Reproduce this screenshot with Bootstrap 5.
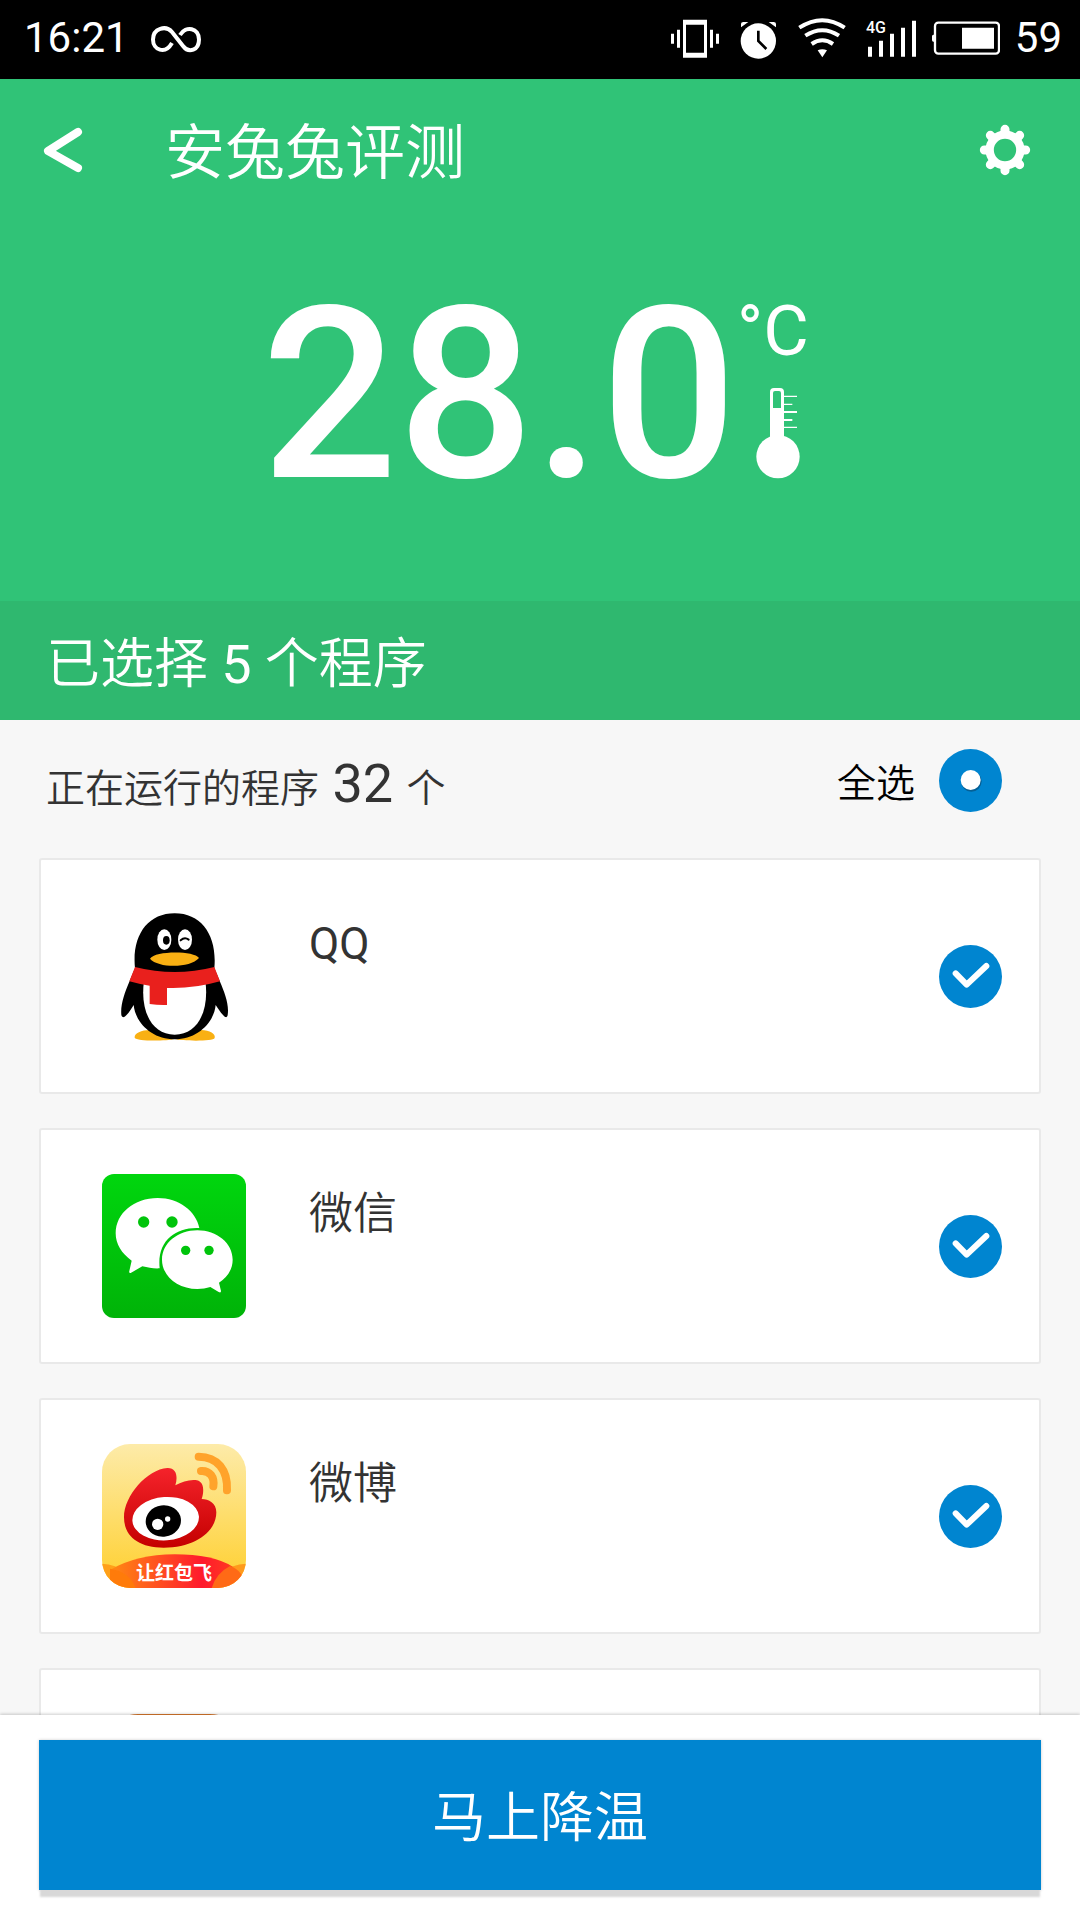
<!DOCTYPE html>
<html lang="zh-CN">
<head>
<meta charset="utf-8">
<meta name="viewport" content="width=device-width, initial-scale=1">
<title>安兔兔评测</title>
<link href="https://cdn.jsdelivr.net/npm/bootstrap@5.3.0/dist/css/bootstrap.min.css" rel="stylesheet">
<style>
:root { --green: #30c377; --green-dark: #2fb86f; --blue: #0085d0; }
body { font-family: Roboto, "Noto Sans CJK SC", sans-serif; font-weight: 350; background: #f7f7f7; color: #333; }
svg { display: block; flex: none; }
.latin { font-weight: 400; }
.status-bar { height: 79px; flex: none; background: #000; font-size: 42px; line-height: 48px; padding: 0 18px 0 24px; }
.status-bar span { padding-bottom: 4px; }
.status-left { gap: 22px; }
.status-icons { gap: 15px; }
.hero { background: var(--green); flex: none; }
.title-bar { height: 142px; padding: 0 46px 0 40px; }
.app-title { font-size: 60px; line-height: 72px; font-weight: 350; margin-left: 77px; padding-top: 8px; }
.reading { padding: 54px 10px 86px 0; }
.degrees { font-size: 240px; line-height: 240px; font-weight: 500; }
.unit-box { padding: 20px 0 0; }
.unit { font-size: 70px; line-height: 72px; }
.thermo { margin: 20px 0 0 18px; }
.selected-bar { background: var(--green-dark); font-size: 54px; line-height: 79px; padding: 24px 46px 16px; }
.list-head { font-size: 39px; line-height: 60px; padding: 22px 78px 39px 46px; }
.running { padding-top: 12px; }
.run-count { font-size: 54px; }
.all-label { color: #000; padding-top: 6px; }
.round-check.form-check-input { width: 63px; height: 63px; margin: 0; border: 0; border-radius: 50%; background-size: 100% 100%; flex: none; }
.round-check:checked { background-color: var(--blue); }
.round-check[type=checkbox]:checked { background-image: url("data:image/svg+xml,%3Csvg xmlns='http://www.w3.org/2000/svg' viewBox='0 0 189 189'%3E%3Cpath d='M50 85L83 119L142 63' fill='none' stroke='%23fff' stroke-width='18' stroke-linecap='round' stroke-linejoin='round'/%3E%3C/svg%3E"); }
.round-check[type=radio]:checked { background-image: url("data:image/svg+xml,%3Csvg xmlns='http://www.w3.org/2000/svg' viewBox='0 0 189 189'%3E%3Ccircle cx='97' cy='97' r='31' fill='%23056096'/%3E%3Ccircle cx='95' cy='93' r='30' fill='%23fff'/%3E%3C/svg%3E"); }
.app-list { padding: 0 39px; gap: 34px; }
.app-card { height: 236px; flex: none; border: 2px solid #e9e9e9; border-radius: 3px; padding: 0 37px 0 61px; background: #fff; }
.app-card svg, .app-card .app-icon { width: 144px; height: 144px; }
.app-name { font-size: 44px; line-height: 60px; margin: 54px 0 0 63px; align-self: flex-start; }
.app-icon { background: linear-gradient(#d9782c 2px, #f0a050); border-radius: 36px; }
.footer-bar { background: #fff; padding: 25px 39px 30px; box-shadow: 0 -1px 3px rgba(0,0,0,.2); z-index: 1; flex: none; }
.cool-btn { height: 150px; background: var(--blue); color: #fff; border: 0; border-radius: 0; font-size: 54px; line-height: 60px; padding-top: 14px; font-weight: 350; box-shadow: 0 8px 2px -1px #d8d8d8, 0 0 3px rgba(0,0,0,.2); }
.cool-btn:hover { background: #0077bb; color: #fff; }
</style>
</head>
<body>
<div class="d-flex flex-column vh-100 overflow-hidden">
  <div class="status-bar latin d-flex align-items-center justify-content-between text-white">
    <div class="status-left d-flex align-items-center">
      <span>16:21</span>
      <svg width="50" height="28" viewBox="0 0 50 28" fill="none" stroke="#fff" stroke-width="4"><path d="M21 17C14 29 2 24 2 13.500C2 2 15 -1 21 6L32 20C38 28 48 24 48 13.500C48 2 35 -1 29 9"/></svg>
    </div>
    <div class="status-icons d-flex align-items-center">
      <svg width="51" height="44" viewBox="93 52 153 132" fill="#fff"><path fill-rule="evenodd" d="M129 57h72v114h-72zM138 72v84h54V72z"/><path d="M93 99h9v30h-9zM111 87h9v54h-9zM210 87h9v54h-9zM228 99h9v30h-9z"/></svg>
      <svg width="42" height="44" viewBox="291 52 126 132"><circle cx="355" cy="121" r="53" fill="#fff"/><path d="M303 80V70Q303 64 310 64H325ZM408 80V70Q408 64 401 64H386Z" fill="#fff"/><path d="M355 90V121L379 145" fill="none" stroke="#000" stroke-width="8"/></svg>
      <svg width="56" height="44" viewBox="462 52 168 132" fill="none" stroke="#fff" stroke-width="12"><path d="M478 81Q547 36 614 81M496 105Q547 72 597 105M515 130Q547 108 579 130"/><path d="M533 149Q547 142 561 149L547 170Z" fill="#fff" stroke="none"/></svg>
      <svg width="52" height="44" viewBox="675 52 156 132" fill="#fff"><text x="678" y="96" font-size="48" font-weight="500">4G</text><path d="M684 138h12v30h-12zM717 120h12v48h-12zM750 99h12v69h-12zM783 81h12v87h-12zM816 60h12v108h-12z"/></svg>
      <svg width="68" height="44" viewBox="876 52 204 132"><rect x="885" y="66" width="192" height="93" rx="10" fill="none" stroke="#fff" stroke-width="7"/><path d="M966 81h96v63h-96zM883 102h-3q-4 0-4 5v11q0 5 4 5h3z" fill="#fff"/></svg>
      <span>59</span>
    </div>
  </div>

  <header class="hero text-white">
    <nav class="title-bar d-flex align-items-center">
      <a href="#" aria-label="返回"><svg width="48" height="54" viewBox="0 0 48 54" fill="none" stroke="#fff" stroke-width="8" stroke-linecap="round" stroke-linejoin="round"><path d="M38 9L8 28L38 45"/></svg></a>
      <h1 class="app-title mb-0">安兔兔评测</h1>
      <button type="button" class="btn p-0 border-0 ms-auto" aria-label="设置"><svg width="58" height="58" viewBox="-87 -87 174 174" stroke="#fff" fill="none"><circle r="46" stroke-width="25"/><path stroke-width="27" stroke-linecap="round" d="M0 -62V-50M0 62V50M-62 0H-50M62 0H50M-44 -44L-36 -36M44 44L36 36M-44 44L-36 36M44 -44L36 -36"/></svg></button>
    </nav>
    <div class="reading d-flex justify-content-center">
      <span class="degrees">28.0</span>
      <div class="unit-box d-flex flex-column align-items-start">
        <span class="unit latin">°C</span>
        <svg class="thermo" width="48" height="92" viewBox="102 291 144 276" fill="#fff"><path fill-rule="evenodd" d="M147 450V306Q147 294 159 294H177Q189 294 189 306V450ZM156 354H180V309Q180 303 174 303H162Q156 303 156 309Z"/><circle cx="171" cy="500" r="65"/><path d="M189 317h39v4h-39zM189 341h25v4h-25zM189 363h39v6h-39zM189 387h25v6h-25zM189 410h39v4h-39z"/></svg>
      </div>
    </div>
    <div class="selected-bar">已选择 <span class="latin">5</span> 个程序</div>
  </header>

  <main class="flex-grow-1 overflow-hidden d-flex flex-column">
    <div class="list-head d-flex align-items-center justify-content-between">
      <div class="running">正在运行的程序<span class="run-count latin"> 32 </span>个</div>
      <div class="d-flex align-items-center gap-4">
        <label class="all-label" for="all">全选</label>
        <input class="form-check-input round-check" type="radio" id="all" checked>
      </div>
    </div>
    <div class="app-list d-flex flex-column">
      <div class="app-card d-flex align-items-center">
        <svg viewBox="36 69 432 432">
          <path fill="#f9b013" d="M134 470C132 455 160 445 185 447H330C358 446 378 458 374 471C370 482 275 480 254 474C230 480 140 482 134 470Z"/>
          <path d="M135 262C125 165 172 97 254 97C336 97 382 165 373 262L390 302C404 335 418 370 413 402C410 415 402 410 377 372C372 425 322 475 254 475C186 475 136 425 131 372C108 410 98 415 94 402C91 370 104 335 118 302Z"/>
          <path fill="#fff" d="M162 300C150 385 182 461 254 461C326 461 358 385 346 300Z"/>
          <path fill="#e9201d" d="M135 258Q254 288 373 258L390 301Q310 324 231 321V372Q205 373 179 369V314Q145 309 118 301Z"/>
          <ellipse cx="223" cy="176" rx="21" ry="31" fill="#fff"/><ellipse cx="285" cy="176" rx="21" ry="31" fill="#fff"/>
          <ellipse cx="229" cy="178" rx="10" ry="13"/><path d="M272 178Q284 167 296 176" fill="none" stroke="#000" stroke-width="6" stroke-linecap="round"/>
          <path fill="#f9b013" d="M180 233C195 209 312 209 327 231C300 262 205 262 180 233Z"/>
        </svg>
        <label class="app-name latin" for="qq">QQ</label>
        <input class="form-check-input round-check ms-auto" type="checkbox" id="qq" checked>
      </div>
      <div class="app-card d-flex align-items-center">
        <svg viewBox="36 42 432 432">
          <defs><linearGradient id="wx" x2="0" y2="1"><stop stop-color="#00d60e"/><stop offset="1" stop-color="#00b308"/></linearGradient></defs>
          <rect x="36" y="42" width="432" height="432" rx="36" fill="url(#wx)"/>
          <path fill="#fff" d="M328 204C260 200 200 240 209 325C190 326 175 323 157 319L122 339Q116 340 118 333L125 302C95 281 77 252 77 220C77 160 132 114 203 114C267 114 318 153 328 204Z"/>
          <path fill="#fff" d="M322 211C381 211 428 250 428 299C428 328 412 352 387 368L393 393Q393 400 386 396L361 381C349 385 336 387 322 387C263 387 216 348 216 299C216 250 263 211 322 211Z"/>
          <g fill="#00c40b"><circle cx="161" cy="186" r="17"/><circle cx="246" cy="186" r="17"/><circle cx="287" cy="271" r="14"/><circle cx="357" cy="271" r="14"/></g>
        </svg>
        <label class="app-name" for="wechat">微信</label>
        <input class="form-check-input round-check ms-auto" type="checkbox" id="wechat" checked>
      </div>
      <div class="app-card d-flex align-items-center">
        <svg viewBox="36 42 432 432">
          <defs>
            <linearGradient id="wb" x2="0" y2="1"><stop stop-color="#fdeba9"/><stop offset="1" stop-color="#ffcf2c"/></linearGradient>
            <linearGradient id="wr" x2="0" y2="1"><stop stop-color="#f5232b"/><stop offset="1" stop-color="#c40000"/></linearGradient>
            <linearGradient id="wo"><stop stop-color="#ff8a12"/><stop offset=".75" stop-color="#ff1a2d"/><stop offset="1" stop-color="#ff3a20"/></linearGradient>
            <clipPath id="wc"><rect x="36" y="42" width="432" height="432" rx="84"/></clipPath>
          </defs>
          <g clip-path="url(#wc)">
            <path fill="url(#wb)" d="M36 42h432v432H36z"/>
            <circle cx="36" cy="502" r="101" fill="#ffa019"/><circle cx="468" cy="502" r="101" fill="#ff9a1c"/>
            <path fill="url(#wo)" d="M60 420Q140 373 254 373Q368 373 428 410L380 474H130Z"/>
            <path fill="#ff7b0a" d="M60 416Q118 425 137 474H60Z"/><path fill="#ff6a16" d="M420 408Q378 430 365 474H468Q460 420 420 408Z"/>
          </g>
          <path fill="url(#wr)" d="M221 353C145 353 102 318 102 262C102 197 172 118 232 114C260 113 264 140 256 166C280 154 312 144 330 155C343 164 341 190 335 207C356 208 379 218 379 247C379 305 315 353 221 353Z"/>
          <ellipse cx="227" cy="266" rx="100" ry="65" transform="rotate(-4 227 266)" fill="#fff"/>
          <ellipse cx="220" cy="273" rx="53" ry="47" transform="rotate(-8 220 273)"/>
          <circle cx="203" cy="283" r="17" fill="#fff"/><circle cx="233" cy="267" r="8" fill="#fff"/>
          <path d="M326 80C382 80 414 120 411 181M333 123C360 121 374 142 370 169" fill="none" stroke="#ffa32b" stroke-width="24" stroke-linecap="round"/>
          <text x="252" y="449" text-anchor="middle" font-size="57" font-weight="700" fill="#fff">让红包飞</text>
        </svg>
        <label class="app-name" for="weibo">微博</label>
        <input class="form-check-input round-check ms-auto" type="checkbox" id="weibo" checked>
      </div>
      <div class="app-card d-flex align-items-center"><div class="app-icon"></div></div>
    </div>
  </main>

  <footer class="footer-bar">
    <button type="button" class="btn cool-btn w-100">马上降温</button>
  </footer>
</div>
<script src="https://cdn.jsdelivr.net/npm/bootstrap@5.3.0/dist/js/bootstrap.bundle.min.js"></script>
</body>
</html>
